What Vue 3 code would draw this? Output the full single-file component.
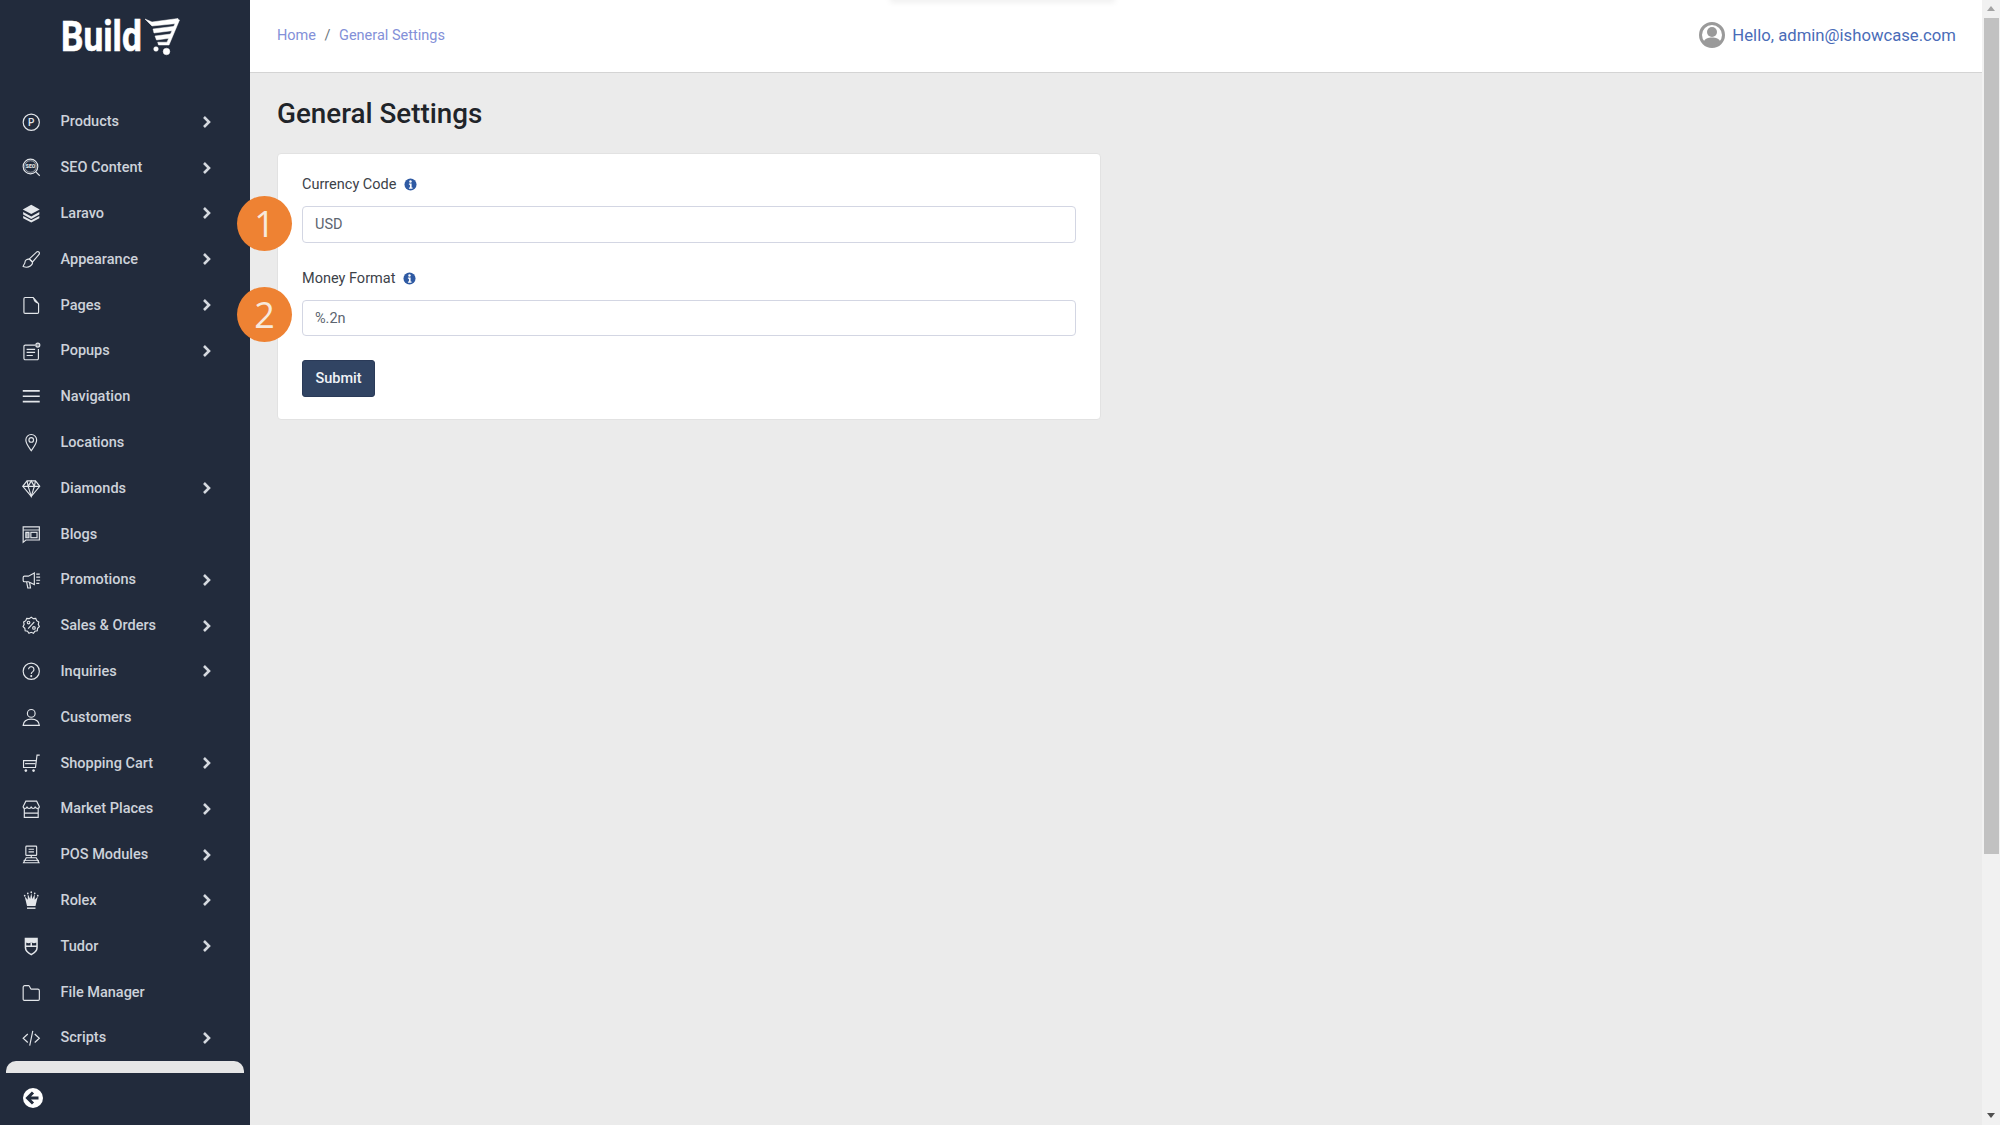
<script setup>
const I = {
  p: '<circle cx="12" cy="12" r="10.5"/><text x="12" y="16.5" text-anchor="middle" font-family="Roboto" font-size="13" font-weight="500" fill="currentColor" stroke="none">P</text>',
  seo: '<circle cx="11" cy="11" r="9.5"/><circle cx="11" cy="11" r="7.5" stroke-width=".8"/><text x="11" y="13.3" text-anchor="middle" font-family="Roboto" font-size="6.6" font-weight="900" fill="currentColor" stroke="none">SEO</text><path d="M18 18l5 5"/>',
  layers: '<path d="M12 1l11 6-11 6L1 7z" fill="currentColor" stroke="none"/><path d="M1.500 10.500L12 16.200l10.500-5.700v3L12 19.500 1.500 13.500z" fill="currentColor" stroke="none"/><path d="M1.500 15.500L12 21.200l10.500-5.700v3L12 24 1.500 18.500z" fill="currentColor" stroke="none"/>',
  brush: '<path d="M19.500 2.200a2.300 2.300 0 0 1 2.800 3.300l-8.500 10-4.300-3.900z"/><path d="M9.500 11.800c-3.300-.3-5.600 1.600-5.700 4.300-.1 2-1.700 2.600-2.300 5.300 3.800 1.500 7 1 9.300-.7 2.300-1.600 3.300-3.600 2.600-5z"/>',
  page: '<path d="M2.500 3.500A1.500 1.500 0 0 1 4 2h10.500l7 8v11a1.500 1.500 0 0 1-1.500 1.500H4A1.500 1.500 0 0 1 2.500 21z"/><path d="M14.500 2c.3 4.800 2.500 7.600 7 8z" fill="currentColor" stroke="none"/>',
  popup: '<path d="M17 4H4.500A1.800 1.800 0 0 0 2.500 6v15A1.800 1.800 0 0 0 4.500 23h15a1.800 1.800 0 0 0 1.800-2V9"/><path d="M6 9.500h11M6 13.500h11M6 17.500h8"/><circle cx="20.500" cy="4" r="2.600" fill="currentColor" fill-opacity=".5"/>',
  nav: '<path d="M1 5h22M1 12h22M1 19h22" stroke-width="2.200"/>',
  loc: '<path d="M12 23C8 17 5 13.500 5 9a7 7 0 0 1 14 0c0 4.500-3 8-7 14z"/><circle cx="12" cy="9" r="3"/>',
  diamond: '<path d="M6.500 2.500h11L23 9.500 12 22.500 1 9.500z"/><path d="M1 9.500h22M8 9.500l4 13 4-13M6.500 2.500l1.500 7 4-7 4 7 1.500-7"/>',
  blog: '<path d="M1.500 2.500h21v17H5l-3.500 3z"/><path d="M1.500 6.500h21" stroke-width="1.200"/><path d="M5 9.500h4v7H5z" fill="currentColor" fill-opacity=".6"/><rect x="11.500" y="9.500" width="8" height="7"/>',
  promo: '<path d="M1.500 8.500c0-1 .8-1.800 1.800-1.800h5L16 2.500v15l-7.700-3.500H3.300c-1 0-1.800-.8-1.800-1.800z"/><path d="M6 14l1.500 8h3.500l-1.300-7.500M18.500 4h4.500M18.500 8h5M18.500 12h5M18.500 16h4"/>',
  sales: '<path d="M12 1.500l2.600 1.900 3.200-.3 1.200 3 2.800 1.600-.7 3.100 1.400 2.900-2.300 2.200-.4 3.200-3.100.7-1.800 2.600-2.900-1.300-3 1.300-1.800-2.600-3.100-.7-.4-3.200L1.400 13.700l1.400-2.900-.7-3.100L4.900 6.100l1.200-3 3.200.3z"/><path d="M8 16.500l8-9"/><circle cx="8.500" cy="8.500" r="1.700"/><circle cx="15.500" cy="15.500" r="1.700"/>',
  help: '<circle cx="12" cy="12" r="10.500"/><path d="M8.500 9.500a3.500 3.500 0 1 1 5.500 3c-1.400.9-2 1.600-2 3.200"/><circle cx="12" cy="18.300" r=".6" fill="currentColor"/>',
  user: '<circle cx="12" cy="7" r="5"/><path d="M1.500 22.500c.5-5.500 4.500-8 10.500-8s10 2.500 10.500 8z"/>',
  cart: '<path d="M23 1.500h-3.500L17.500 17.500H2v-9h16.500"/><path d="M4 12.500h13.500"/><circle cx="5" cy="21.500" r="1.700" fill="currentColor" stroke="none"/><circle cx="15" cy="21.500" r="1.700" fill="currentColor" stroke="none"/>',
  store: '<path d="M5 1.500h14l3.500 7c0 1.500-1 2.500-2.500 2.500s-2.500-1-2.800-2.500c-.3 1.500-1.500 2.500-2.800 2.500S12.300 10 12 8.500C11.700 10 10.500 11 9.200 11S6.800 10 6.500 8.500C6.200 10 5.500 11 4 11S1.500 10 1.500 8.500z"/><path d="M3 11v11.500h18V11M3 17h18"/>',
  pos: '<rect x="5" y="1.500" width="14" height="12" rx="1"/><path d="M8.500 5.500h7M8.500 9h7"/><path d="M12 13.500v3M5.500 16.500h13l3.500 6.500H2z"/><path d="M2 20h20" stroke-width="1.200"/>',
  crown: '<path d="M6.500 19.500L3.500 7l4 4.500V4l3 6.500L12 2.500l1.500 8 3-6.500v7.500l4-4.500-3 12.500z" fill="currentColor" stroke="none"/><circle cx="3.500" cy="6" r="1.100" fill="currentColor" stroke="none"/><circle cx="7.500" cy="3" r="1.100" fill="currentColor" stroke="none"/><circle cx="12" cy="1.500" r="1.100" fill="currentColor" stroke="none"/><circle cx="16.500" cy="3" r="1.100" fill="currentColor" stroke="none"/><circle cx="20.500" cy="6" r="1.100" fill="currentColor" stroke="none"/><path d="M6.500 22.300h11" stroke-width="1.800"/>',
  shield: '<path d="M4.500 2h15v12c0 3.500-3 6.500-7.500 8.800C7.500 20.500 4.500 17.500 4.500 14z" stroke-width="2"/><path d="M4.500 2h15v5l-4 1-3.500-1-3.500 1-4-1z" fill="currentColor" stroke="none"/><path d="M4.500 12h15" stroke-width="2"/><path d="M12 7v6" stroke-width="2"/>',
  folder: '<path d="M1.500 5.500A2 2 0 0 1 3.500 3.500h5.200c1.200 0 1.800 3.500 3.300 4.500h8.500a2 2 0 0 1 2 2v11a1.500 1.500 0 0 1-1.500 1.500h-18a1.500 1.500 0 0 1-1.500-1.500z"/>',
  code: '<path d="M7.500 6.500L1.500 12l6 5.500M16.500 6.500l6 5.500-6 5.500M14 2.500L10 21.500"/>'
}
const menu = [
  ['Products', I.p, 1], ['SEO Content', I.seo, 1], ['Laravo', I.layers, 1], ['Appearance', I.brush, 1],
  ['Pages', I.page, 1], ['Popups', I.popup, 1], ['Navigation', I.nav, 0], ['Locations', I.loc, 0],
  ['Diamonds', I.diamond, 1], ['Blogs', I.blog, 0], ['Promotions', I.promo, 1], ['Sales & Orders', I.sales, 1],
  ['Inquiries', I.help, 1], ['Customers', I.user, 0], ['Shopping Cart', I.cart, 1], ['Market Places', I.store, 1],
  ['POS Modules', I.pos, 1], ['Rolex', I.crown, 1], ['Tudor', I.shield, 1], ['File Manager', I.folder, 0], ['Scripts', I.code, 1]
].map(([label, icon, arrow]) => ({ label, icon, arrow }))
</script>

<template>
  <div class="app">
    <aside class="sidebar">
      <div class="logo">
        <span class="logo-text"><span>Build</span></span>
        <svg class="logo-cart" viewBox="0 0 36 38" fill="#fff" stroke="#fff" stroke-width=".5">
          <path d="M1 1l7 3 26-3.500-1.200 5L8 8z"/>
          <path d="M9 11l22-2.800-1.200 4.300L10 15z"/>
          <path d="M11 18l17.500-2.200-1.400 4.200L12.500 22z"/>
          <path d="M33 1l2.500 1L25 27H14.500l-.8-2.800h9.300z"/>
          <circle cx="12" cy="31" r="2.300"/><circle cx="22.500" cy="33.500" r="3.300"/>
        </svg>
      </div>
      <nav class="menu">
        <a v-for="m in menu" :key="m.label" class="item">
          <svg class="icon" viewBox="0 0 24 24" fill="none" stroke="currentColor" stroke-width="1.500" v-html="m.icon"></svg>
          <span class="label">{{ m.label }}</span>
          <svg v-if="m.arrow" class="chev" viewBox="0 0 10 14" fill="none" stroke="currentColor" stroke-width="2.600"><path d="M2 2l5 5-5 5"/></svg>
        </a>
      </nav>
      <div class="pill"></div>
      <div class="foot">
        <svg class="back" viewBox="0 0 20 20"><circle cx="10" cy="10" r="10" fill="#fff"/><path d="M10 4.500L4.500 10l5.500 5.500M5 10h10.500" fill="none" stroke="#222b3c" stroke-width="3"/></svg>
      </div>
    </aside>
    <div class="body">
      <header class="header">
        <div class="top-shadow"></div>
        <div class="crumbs"><a>Home</a><span class="sep">/</span><a>General Settings</a></div>
        <div class="hello">
          <svg class="avatar" viewBox="0 0 26 26"><circle cx="13" cy="13" r="11.500" fill="#fff" stroke="#9a9a9a" stroke-width="3"/><circle cx="13" cy="10" r="5" fill="#9a9a9a"/><path d="M4.500 20c1.500-3.500 4.500-4.500 8.500-4.500s7 1 8.500 4.500A11.500 11.500 0 0 1 13 24a11.500 11.500 0 0 1-8.500-4z" fill="#9a9a9a"/></svg>
          <span>Hello, admin@ishowcase.com</span>
        </div>
      </header>
      <main class="content">
        <h1>General Settings</h1>
        <form class="card" @submit.prevent>
          <div class="field">
            <label>Currency Code <svg class="info" viewBox="0 0 14 14"><circle cx="7" cy="7" r="6.500" fill="#2f5aa3"/><circle cx="7" cy="3.700" r="1.300" fill="#fff"/><path d="M5.300 6h2.900v4.200h1v1.300H5.300v-1.300h1.100V7.300H5.300z" fill="#fff"/></svg></label>
            <div class="control">
              <span class="badge">1</span>
              <input value="USD" />
            </div>
          </div>
          <div class="field">
            <label>Money Format <svg class="info" viewBox="0 0 14 14"><circle cx="7" cy="7" r="6.500" fill="#2f5aa3"/><circle cx="7" cy="3.700" r="1.300" fill="#fff"/><path d="M5.300 6h2.900v4.200h1v1.300H5.300v-1.300h1.100V7.300H5.300z" fill="#fff"/></svg></label>
            <div class="control">
              <span class="badge second">2</span>
              <input value="%.2n" />
            </div>
          </div>
          <button class="submit">Submit</button>
        </form>
      </main>
    </div>
    <div class="scrollbar">
      <svg class="arrow" viewBox="0 0 10 6"><path d="M5 0l5 6H0z" fill="#a3a3a3"/></svg>
      <div class="thumb"></div>
      <svg class="arrow down" viewBox="0 0 10 6"><path d="M5 6L0 0h10z" fill="#505050"/></svg>
    </div>
  </div>
</template>

<style>
html, body { margin: 0; overflow: hidden; }
</style>

<style scoped>
.app { display: flex; height: 100vh; font-family: Roboto, "Liberation Sans", sans-serif; background: #ebebeb; }
.sidebar { width: 250px; flex: none; background: #222b3c; display: flex; flex-direction: column; color: #cfd4dc; }
.logo { height: 99px; flex: none; display: flex; align-items: flex-start; padding: 12px 0 0 61px; box-sizing: border-box; }
.logo-text { display: block; width: 83px; height: 50px; color: #fff; font-size: 42px; line-height: 50px; font-weight: 700; }
.logo-text span { display: inline-block; transform: scaleX(.84); transform-origin: left center; -webkit-text-stroke: .6px #fff; }
.logo-cart { width: 36px; height: 38px; margin-top: 6px; }
.menu { display: flex; flex-direction: column; }
.item { position: relative; display: flex; align-items: center; height: 45.800px; padding-left: 22px; }
.icon { width: 18.500px; height: 18.500px; flex: none; overflow: visible; color: #e3e6ea; }
.label { margin-left: 20px; font-size: 14.500px; font-weight: 500; color: #cdd2da; }
.chev { position: absolute; left: 202px; width: 10px; height: 14px; color: #d5d9df; }
.pill { height: 12px; margin: 0 6px; background: #e6e6e6; border-radius: 10px 10px 0 0; }
.foot { flex: 1; display: flex; align-items: flex-start; padding: 15px 0 0 23px; }
.back { width: 20px; height: 20px; }
.body { flex: 1; min-width: 0; display: flex; flex-direction: column; }
.header { position: relative; height: 73px; box-sizing: border-box; flex: none; background: #fff; border-bottom: 1px solid #d4d4d4; display: flex; align-items: center; justify-content: space-between; padding: 0 26px 2px 27px; }
.top-shadow { position: absolute; left: 640px; top: -6px; width: 225px; height: 6px; box-shadow: 0 2px 6px rgba(0, 0, 0, .08); }
.crumbs { font-size: 14.500px; color: #8390d8; }
.sep { margin: 0 8.500px; color: #6c757d; }
.hello { display: flex; align-items: center; color: #4a6cb8; font-size: 16.700px; }
.avatar { width: 26px; height: 26px; margin-right: 7px; }
.content { flex: 1; padding: 0 27px; }
h1 { margin: 0; padding: 21px 0 18.500px; font-size: 27.800px; line-height: 40px; font-weight: 500; color: #1f2429; }
.card { width: 824px; box-sizing: border-box; background: #fff; border: 1px solid #e2e2e2; border-radius: 4px; padding: 20px 24px 21.500px; }
.field { margin-bottom: 24px; }
.field + .field { margin-top: 24.500px; }
label { display: flex; align-items: center; height: 22px; margin-bottom: 10.500px; font-size: 14.500px; color: #3c4249; gap: 7.500px; }
.info { width: 13px; height: 13px; }
.control { position: relative; }
input { display: block; width: 100%; box-sizing: border-box; height: 36.700px; border: 1.500px solid #d3d6e3; border-radius: 4px; padding: 0 12px; font: 400 14.500px Roboto, sans-serif; color: #5d6570; background: #fff; outline: none; }
.field:first-child { margin-bottom: 0; }
.badge { position: absolute; left: -65px; top: -10px; width: 55px; height: 55px; border-radius: 50%; background: #ee8233; color: #f7e9dc; display: flex; align-items: center; justify-content: center; font: 400 36px "Open Sans", sans-serif; }
.badge.second { top: -13px; }
.submit { display: block; width: 73px; height: 37px; background: #314463; border: 1px solid #2a3a58; border-radius: 3px; color: #f0f3f7; font: 500 14.500px Roboto, sans-serif; padding: 0; }
.scrollbar { width: 18px; flex: none; background: #f1f1f1; display: flex; flex-direction: column; align-items: center; }
.arrow { width: 8px; height: 5px; margin: 6px 0 7px; flex: none; }
.thumb { width: 15px; height: 836px; background: #c1c1c1; flex: none; }
.down { margin-top: auto; margin-bottom: 7px; }
</style>
